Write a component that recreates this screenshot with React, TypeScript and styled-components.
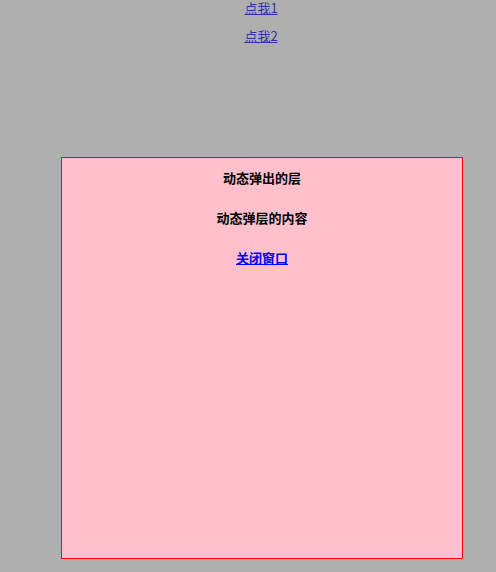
import React, {useState} from "react"
import styled, {createGlobalStyle} from "styled-components"

const GlobalStyle = createGlobalStyle`
body {
  margin: 0;
  background: #ffffff;
  font-family: "Noto Sans CJK SC", "DejaVu Sans", sans-serif;
  font-size: 13px;
}
`

//page behind the layer
const Page = styled.div`
display: flex;
flex-direction: column;
align-items: center;
gap: 12px;
padding: 0 0 0 26px;
line-height: 16px;
`

const OpenLink = styled.a`
color: #0000ee;
text-decoration: underline;
cursor: pointer;
`

//gray mask over the page
const Mask = styled.div`
position: fixed;
inset: 0;
background-color: rgb(96, 96, 96);
opacity: 0.5;
`

//popup layer
const Layer = styled.div`
position: absolute;
left: 61px;
top: 157px;
width: 402px;
height: 402px;
box-sizing: border-box;
border: 1px solid #ff0000;
background-color: #ffc0cb;
display: flex;
flex-direction: column;
align-items: center;
gap: 24px;
padding-top: 12px;
`

const LayerLine = styled.div`
font-weight: bold;
line-height: 16px;
color: #000000;
`

const CloseLink = styled.a`
font-weight: bold;
line-height: 16px;
color: #0000ff;
text-decoration: underline;
cursor: pointer;
`

const App = () => {
  const [isOpen, setIsOpen] = useState<boolean>(true);

  return (
    <>
      <GlobalStyle />
      <Page>
        <OpenLink onClick={() => setIsOpen(true)}>点我1</OpenLink>
        <OpenLink onClick={() => setIsOpen(true)}>点我2</OpenLink>
      </Page>
      {isOpen &&
      <>
        <Mask />
        <Layer>
          <LayerLine>动态弹出的层</LayerLine>
          <LayerLine>动态弹层的内容</LayerLine>
          <CloseLink onClick={() => setIsOpen(false)}>关闭窗口</CloseLink>
        </Layer>
      </>}
    </>
  )
}

export default App;
